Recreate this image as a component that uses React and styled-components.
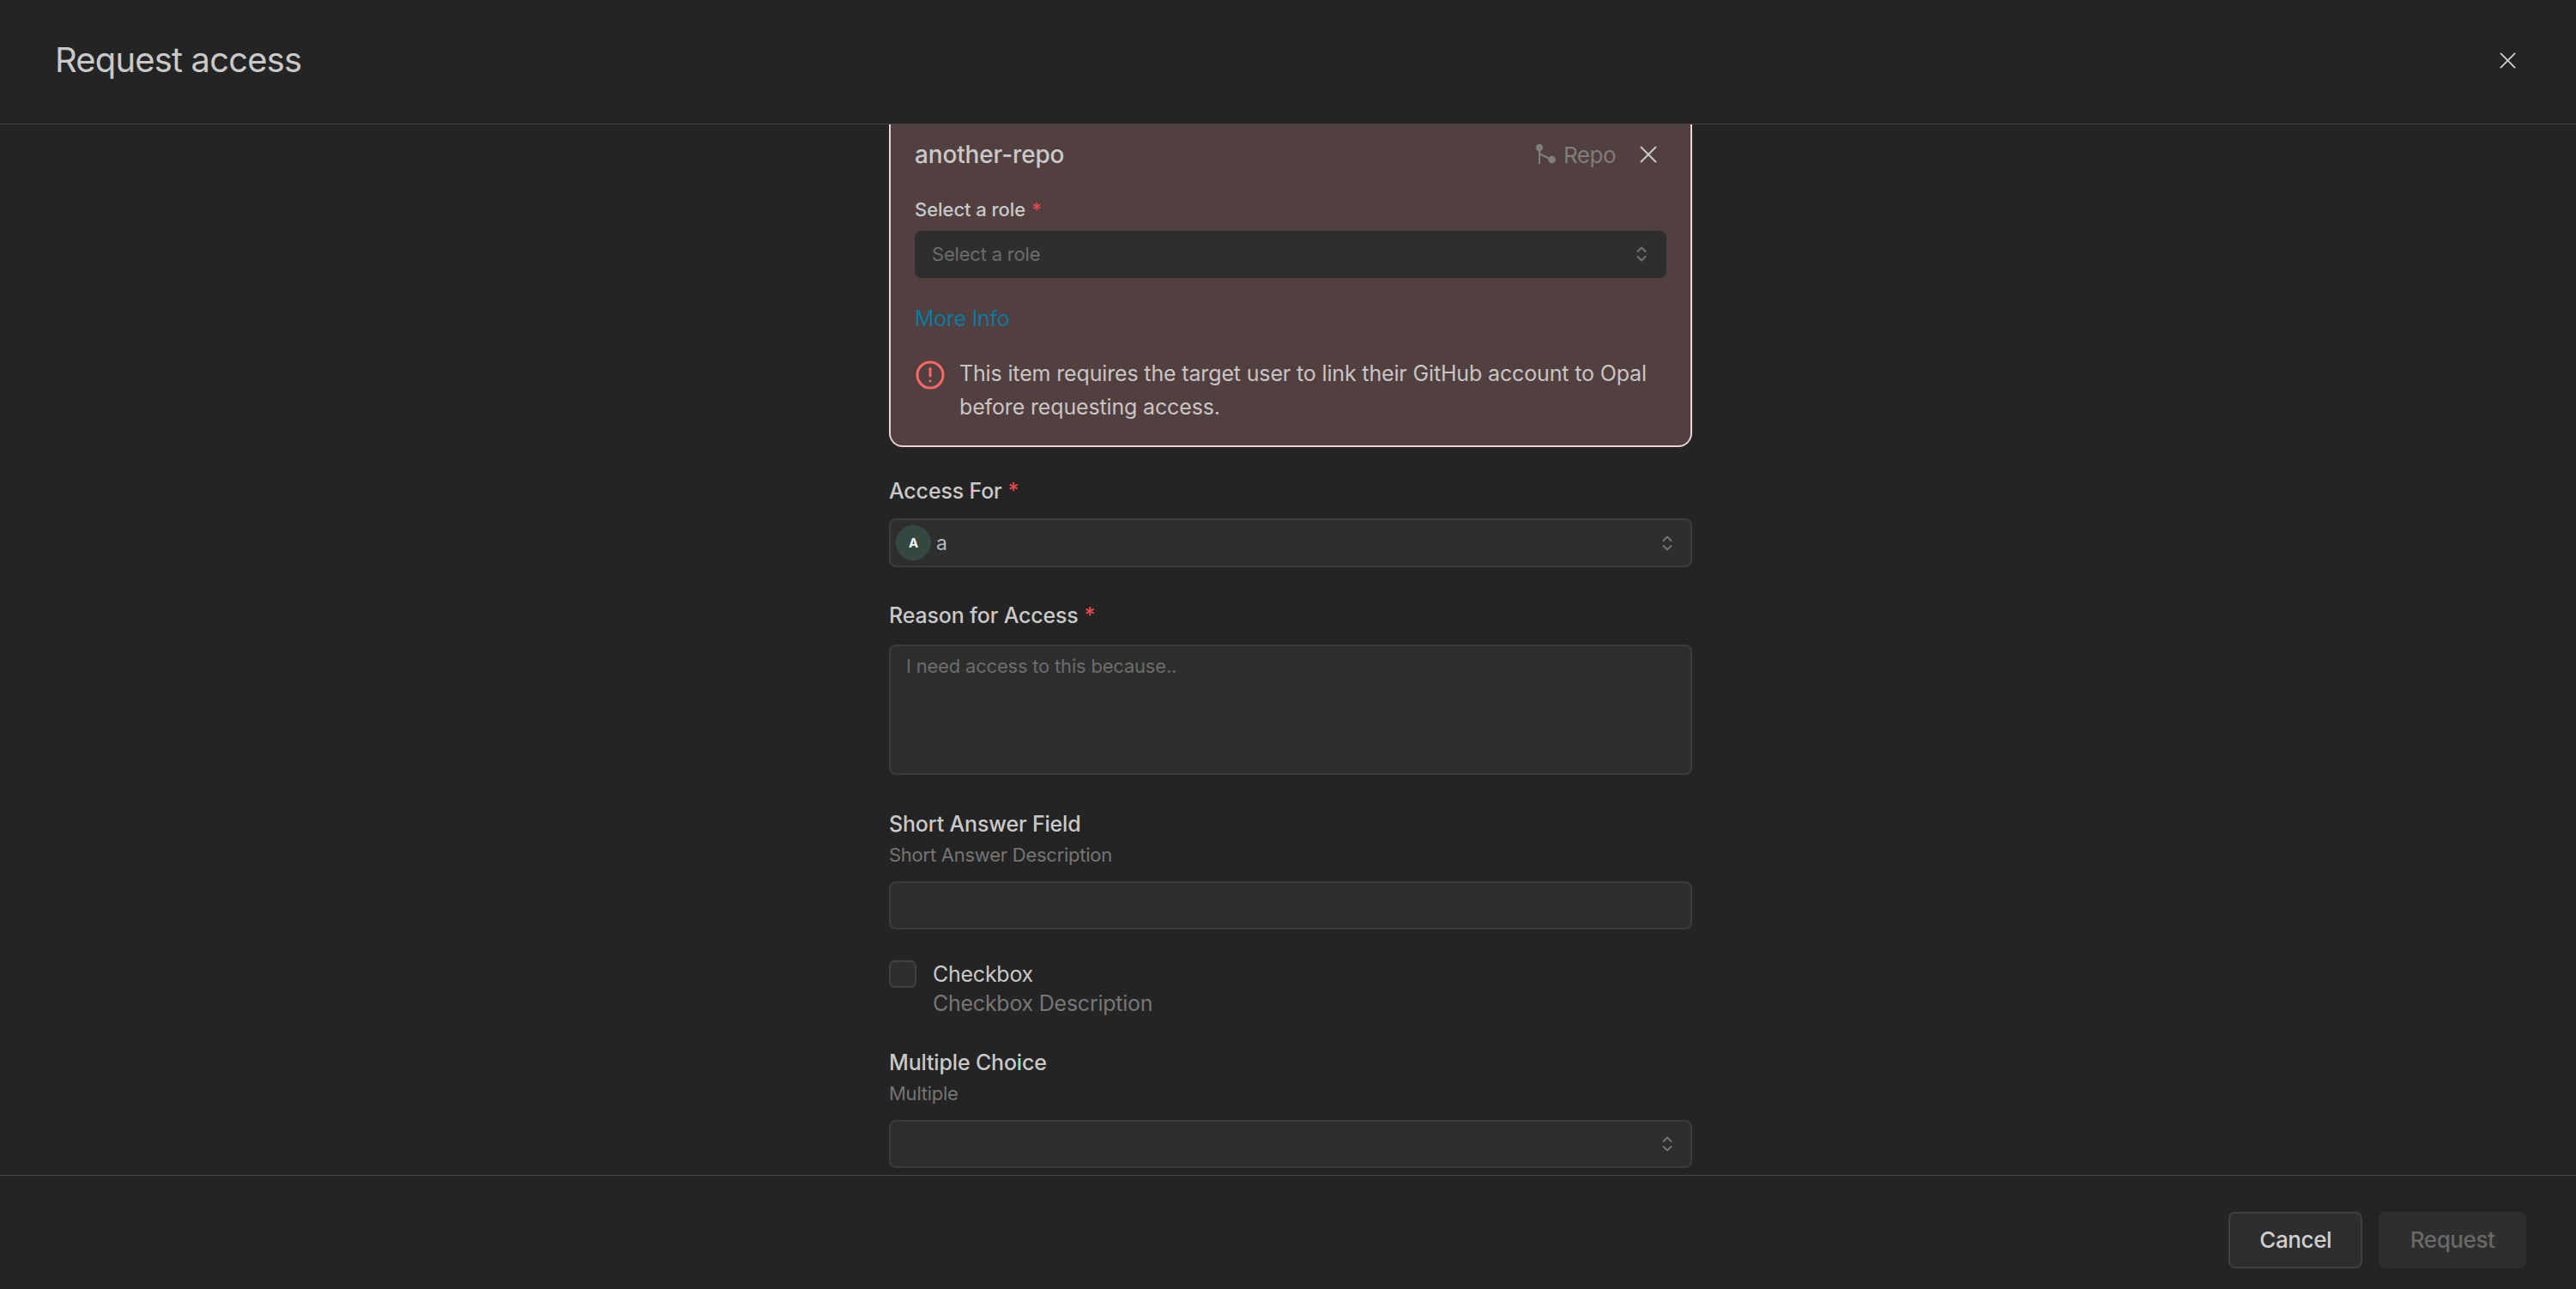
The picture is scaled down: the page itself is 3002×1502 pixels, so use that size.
import React from "react";
import styled, { createGlobalStyle } from "styled-components";

const Global = createGlobalStyle`
  html, body { margin: 0; padding: 0; height: 100%; background: #242424; }
  body { font-family: Inter, "Liberation Sans", sans-serif; -webkit-font-smoothing: antialiased; }
  * { box-sizing: border-box; }
`;

const Page = styled.div`
  width: 3002px; height: 1502px; display: flex; flex-direction: column;
  background: #242424; color: #c9c9c9; overflow: hidden;
`;
const Header = styled.header`
  flex: 0 0 145px; display: flex; align-items: center; justify-content: space-between;
  padding: 0 66px 4px 64px; border-bottom: 1px solid #454545;
`;
const Title = styled.h1`
  margin: 0; font-size: 40px; line-height: 48px; font-weight: 400; color: #c9c9c9; letter-spacing: -0.85px;
`;
const IconButton = styled.button`
  width: 28px; height: 28px; padding: 0; border: 0; background: none; color: #cacaca;
  display: flex; align-items: center; justify-content: center;
`;
const Body = styled.main`
  flex: 1; min-height: 0; overflow: hidden; display: flex; justify-content: center; padding-left: 6px;
`;
const Column = styled.div`
  width: 936px; margin-top: -30px; display: block; flex: none;
`;
const Card = styled.section`
  height: 406px; padding: 28px 28px 0; background: #523f3f; border: 2px solid #ecd0d6; border-radius: 16px;
`;
const CardHead = styled.div`
  height: 44px; margin-top: 13px; display: flex; align-items: center; justify-content: space-between;
`;
const CardTitle = styled.div`
  font-size: 28px; line-height: 36px; font-weight: 500; color: #c9c9c9; letter-spacing: -0.15px;
`;
const CardMeta = styled.div`
  display: flex; align-items: center; color: #7f7c7c; font-size: 26px; line-height: 36px; letter-spacing: -0.5px;
`;
const RepoIcon = styled.svg`
  width: 26px; height: 26px; margin-right: 8px; flex: none;
`;
const RepoText = styled.span`
  padding-top: 2px;
`;
const CloseCard = styled(IconButton)`
  margin: 0 10px 0 27px; width: 22px; height: 22px;
`;
const RoleLabel = styled.div`
  margin-top: 28px; font-size: 22px; line-height: 28px; font-weight: 500; color: #c9c9c9; letter-spacing: -0.05px;
`;
const Req = styled.span`
  color: #e5484d; margin-left: 7px;
`;
const Box = styled.div`
  display: flex; align-items: center; justify-content: space-between;
  height: ${(p) => p.$h || 57}px; padding: 0 20px 0 18px;
  background: #2e2e2e; border: 2px solid ${(p) => (p.$plain ? "#2e2e2e" : "#3c3c3c")}; border-radius: 8px;
`;
const RoleBox = styled(Box)`
  margin-top: 11px; height: 55px; padding-bottom: 1px;
`;
const Placeholder = styled.span`
  font-size: 22px; line-height: 28px; color: #6c6c6c; letter-spacing: -0.2px;
`;
const Chevrons = styled.svg`
  width: 14px; height: 20px; color: #767676; flex: none;
`;
const MoreInfo = styled.a`
  display: block; margin-top: 29px; font-size: 25px; line-height: 36px; color: #0c7a9e; letter-spacing: -0.3px;
`;
const Alert = styled.div`
  margin-top: 27px; display: flex; gap: 18px; align-items: flex-start;
`;
const AlertIcon = styled.svg`
  width: 36px; height: 36px; flex: none; margin: 3px -2px 0 0;
`;
const AlertText = styled.div`
  font-size: 25px; line-height: 39px; color: #c9c5c5; letter-spacing: -0.15px; width: 824px;
`;
const Field = styled.div`
  margin-top: ${(p) => p.$mt}px;
`;
const Label = styled.div`
  font-size: 25px; line-height: 32px; font-weight: 500; color: #c9c9c9; letter-spacing: -0.17px; margin-bottom: ${(p) => p.$mb ?? 16}px;
`;
const Desc = styled.div`
  font-size: 22px; line-height: 28px; color: #757575; letter-spacing: -0.25px; margin-top: 6px; margin-bottom: 17px;
`;
const UserValue = styled.div`
  display: flex; align-items: center; gap: 6px;
`;
const UserBox = styled(Box)`
  padding-left: 6px;
`;
const Avatar = styled.div`
  width: 41px; height: 41px; border-radius: 50%; background: #354840; color: #f2fbf7;
  display: flex; align-items: center; justify-content: center; font-size: 15px; font-weight: 700;
`;
const Value = styled.span`
  font-size: 23px; line-height: 32px; color: #b9b9b9;
`;
const TextArea = styled.div`
  height: 152px; padding: 9px 18px; background: #2e2e2e; border: 2px solid #3c3c3c; border-radius: 8px;
`;
const CheckRow = styled.div`
  margin-top: 36px; display: flex; gap: 19px;
`;
const CheckBox = styled.div`
  width: 32px; height: 32px; flex: none; background: #2e2e2e; border: 2px solid #414141; border-radius: 7px;
`;
const CheckTitle = styled.div`
  font-size: 25px; line-height: 32px; color: #c9c9c9; letter-spacing: -0.25px;
`;
const CheckDesc = styled.div`
  font-size: 25px; line-height: 36px; color: #777; letter-spacing: -0.25px;
`;
const Footer = styled.footer`
  flex: 0 0 133px; border-top: 1px solid #454545; display: flex; justify-content: flex-end;
  gap: 19px; padding: 42px 58px 0 0;
`;
const Button = styled.button`
  height: 66px; padding: 0 ${(p) => p.$px}px; border-radius: 8px; font: 500 26px/36px Inter, sans-serif; letter-spacing: -0.4px;
  background: #2e2e2e; border: 2px solid ${(p) => (p.disabled ? "#2e2e2e" : "#404040")};
  color: ${(p) => (p.disabled ? "#696969" : "#cfcfcf")};
`;

const UpDown = () => (
  <Chevrons viewBox="0 0 14 20" fill="none" stroke="currentColor" strokeWidth="1.8" strokeLinecap="round" strokeLinejoin="round">
    <path d="M2.5 7 7 2.5 11.5 7" />
    <path d="M2.5 13 7 17.5 11.5 13" />
  </Chevrons>
);

const X = ({ size }) => (
  <svg width={size} height={size} viewBox="0 0 20 20" fill="none" stroke="currentColor" strokeWidth="2" strokeLinecap="round">
    <path d="M1.5 1.5 18.5 18.5M18.5 1.5 1.5 18.5" />
  </svg>
);

export default function App() {
  return (
    <Page>
      <Global />
      <Header>
        <Title>Request access</Title>
        <IconButton aria-label="Close"><X size={19} /></IconButton>
      </Header>
      <Body>
        <Column>
          <Card>
            <CardHead>
              <CardTitle>another-repo</CardTitle>
              <CardMeta>
                <RepoIcon viewBox="0 0 26 26" fill="#807d7d" stroke="#807d7d" strokeWidth="2">
                  <circle cx="6" cy="5" r="4.2" stroke="none" />
                  <circle cx="20.5" cy="19" r="4.4" stroke="none" />
                  <path d="M6 5V24M6 12l14 7" fill="none" />
                </RepoIcon>
                <RepoText>Repo</RepoText>
                <CloseCard aria-label="Remove"><X size={20} /></CloseCard>
              </CardMeta>
            </CardHead>
            <RoleLabel>Select a role<Req>*</Req></RoleLabel>
            <RoleBox $plain>
              <Placeholder>Select a role</Placeholder>
              <UpDown />
            </RoleBox>
            <MoreInfo>More Info</MoreInfo>
            <Alert>
              <AlertIcon viewBox="0 0 36 36" fill="none" stroke="#ff6868" strokeWidth="3" strokeLinecap="round">
                <circle cx="18" cy="18" r="15" />
                <path d="M18 10.5v8.5M18 25v.1" />
              </AlertIcon>
              <AlertText>This item requires the target user to link their GitHub account to Opal before requesting access.</AlertText>
            </Alert>
          </Card>
          <Field $mt={35}>
            <Label>Access For<Req>*</Req></Label>
            <UserBox>
              <UserValue><Avatar>A</Avatar><Value>a</Value></UserValue>
              <UpDown />
            </UserBox>
          </Field>
          <Field $mt={40}>
            <Label $mb={18}>Reason for Access<Req>*</Req></Label>
            <TextArea><Placeholder>I need access to this because..</Placeholder></TextArea>
          </Field>
          <Field $mt={41}>
            <Label $mb={0}>Short Answer Field</Label>
            <Desc>Short Answer Description</Desc>
            <Box $h={56} />
          </Field>
          <CheckRow>
            <CheckBox />
            <div>
              <CheckTitle>Checkbox</CheckTitle>
              <CheckDesc>Checkbox Description</CheckDesc>
            </div>
          </CheckRow>
          <Field $mt={35}>
            <Label $mb={0}>Multiple Choice</Label>
            <Desc>Multiple</Desc>
            <Box $h={56}><span /><UpDown /></Box>
          </Field>
        </Column>
      </Body>
      <Footer>
        <Button $px={34}>Cancel</Button>
        <Button $px={34.5} disabled>Request</Button>
      </Footer>
    </Page>
  );
}
